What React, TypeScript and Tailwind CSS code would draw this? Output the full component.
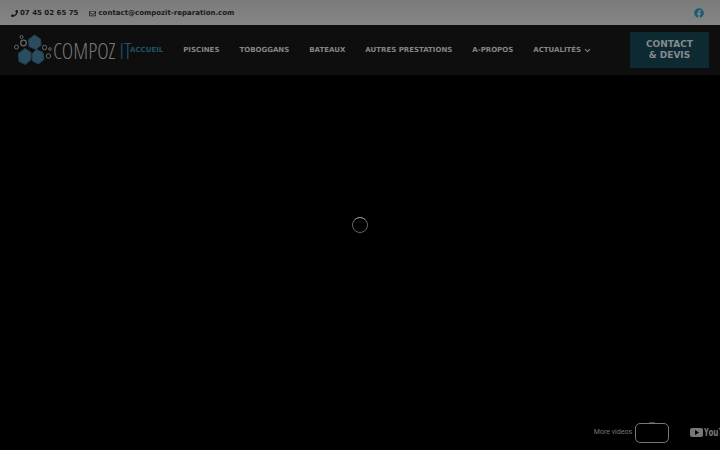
import { FaFacebook, FaPhone, FaRegEnvelope } from "react-icons/fa";
import { ChevronDown } from "lucide-react";

const links = [
  { label: "ACCUEIL", active: true },
  { label: "PISCINES" },
  { label: "TOBOGGANS" },
  { label: "BATEAUX" },
  { label: "AUTRES PRESTATIONS" },
  { label: "A-PROPOS" },
  { label: "ACTUALITÉS", menu: true },
];

export default function App() {
  return (
    <div className="flex min-h-screen flex-col overflow-hidden bg-black font-['DejaVu_Sans',sans-serif]">
      <TopBar />
      <Header />
      <VideoHero />
    </div>
  );
}

function TopBar() {
  return (
    <div className="flex h-[25px] shrink-0 items-center justify-between bg-linear-to-b from-[#7a7a7a] to-[#868686] pr-4 pl-[11px] text-[7px] font-bold text-[#191919]">
      <div className="flex items-center gap-[11px] pt-px">
        <a href="tel:0745026575" className="flex items-center gap-[2px]">
          <FaPhone size={7} />
          07 45 02 65 75
        </a>
        <a
          href="mailto:contact@compozit-reparation.com"
          className="flex items-center gap-[2px]"
        >
          <FaRegEnvelope size={7} />
          contact@compozit-reparation.com
        </a>
      </div>
      <a href="#facebook" aria-label="Facebook" className="text-[#1d5c70]">
        <FaFacebook size={10} />
      </a>
    </div>
  );
}

function Header() {
  return (
    <header className="flex h-[50px] shrink-0 items-center justify-between bg-[#0e0e0e] pr-[11px] pl-[14px]">
      <div className="flex items-center">
        <a
          href="#accueil"
          aria-label="Compoz'it"
          className="flex w-[116px] items-center"
        >
          <LogoMark />
          <span className="flex gap-1 font-['Open_Sans_Condensed_Light','Roboto_Condensed','Roboto',sans-serif] text-[22px] leading-none font-thin whitespace-nowrap text-[#777]">
            COMPOZ <span className="text-[#22586e]">IT</span>
          </span>
        </a>
        <nav className="flex items-center gap-5 text-[7px] font-bold whitespace-nowrap text-[#858585]">
          {links.map((link) => (
            <a
              key={link.label}
              href="#"
              className={
                link.active ? "text-[#1d5365]" : "flex items-center gap-[2px]"
              }
            >
              {link.label}
              {link.menu && <ChevronDown size={9} strokeWidth={3} />}
            </a>
          ))}
        </nav>
      </div>
      <button className="h-9 w-[79px] bg-[#0d2a33] px-3 text-[9px] leading-[11px] font-bold text-[#858b8d]">
        CONTACT &amp; DEVIS
      </button>
    </header>
  );
}

function LogoMark() {
  return (
    <svg
      width="39"
      height="32"
      viewBox="0 0 39 32"
      fill="none"
      className="shrink-0"
    >
      <g fill="#2c4c60" stroke="#1f4355">
        <path d="M20.5 1 26.5 5 27 11 22 15.5 15 12.5 14.5 5.5Z" />
        <path d="M11 14.5 17 18.5 17 25.5 11.5 30.5 5 27.5 4.5 19.5Z" />
        <path d="M22.5 15.5 29 18.5 30 25.5 24.5 30 18.5 27 18 20Z" />
      </g>
      <g stroke="#666">
        <circle cx="9.5" cy="9" r="2.8" strokeWidth="1.3" />
        <circle cx="2.5" cy="13" r="2" />
        <circle cx="7.5" cy="3" r="1.5" />
        <circle cx="30.5" cy="13.5" r="2.2" />
        <circle cx="34.5" cy="22" r="2.2" />
        <circle cx="36" cy="15" r="1.3" />
      </g>
    </svg>
  );
}

function VideoHero() {
  return (
    <main className="flex flex-1 flex-col">
      <div
        className="flex flex-1 items-center justify-center pb-12"
        role="status"
        aria-label="Chargement"
      >
        <svg width="18" height="18" viewBox="0 0 18 18" fill="none">
          <circle cx="9" cy="9" r="7.5" stroke="#666" />
          <path d="M3.7 3.7A7.5 7.5 0 0 1 14.3 3.7" stroke="#888" />
        </svg>
      </div>
      <div className="flex h-7 items-start justify-end pt-px font-['Roboto',sans-serif] text-[#777]">
        <span className="pt-1 text-[7px] leading-[11px]">More videos</span>
        <button
          aria-label="More videos"
          className="relative ml-[3px] h-5 w-[34px] rounded-[5px] border border-[#777]"
        >
          <span className="absolute -top-[2px] left-[13px] h-px w-[6px] bg-[#444]" />
        </button>
        <a
          href="#youtube"
          aria-label="YouTube"
          className="ml-[21px] flex w-[30px] items-center gap-px pt-[3px] font-['Open_Sans_Condensed',sans-serif] text-[10px] leading-[13px] font-bold"
        >
          <svg
            width="13"
            height="9"
            viewBox="0 0 13 9"
            fill="#777"
            className="shrink-0"
          >
            <rect width="13" height="9" rx="2" />
            <path d="m5 2 4 2.5L5 7Z" fill="#000" />
          </svg>
          YouTube
        </a>
      </div>
    </main>
  );
}
